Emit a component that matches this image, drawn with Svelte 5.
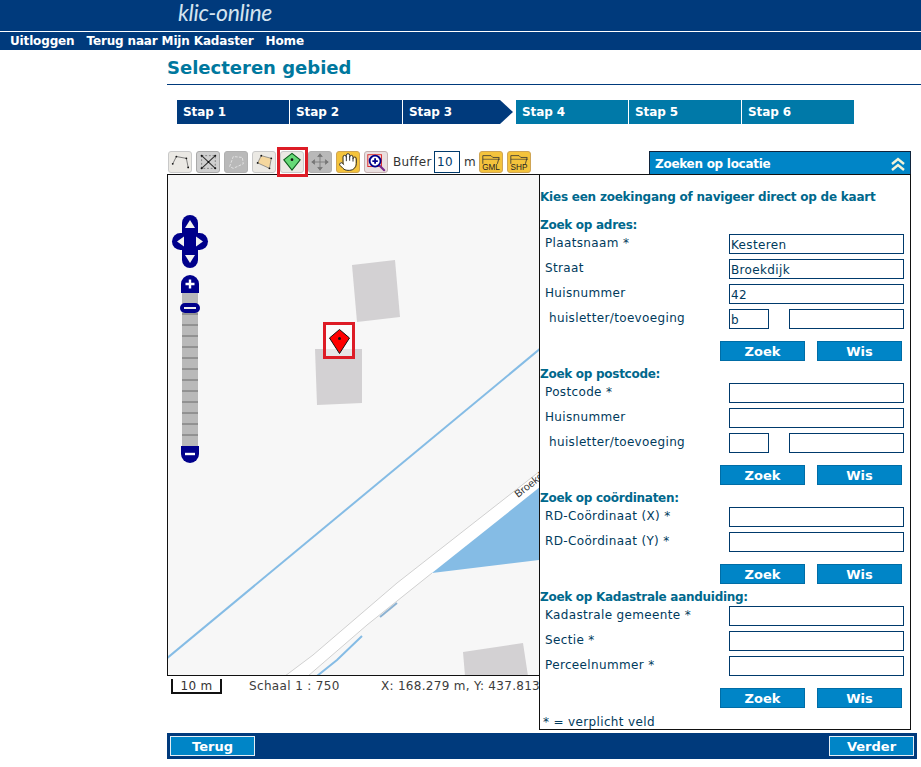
<script>
  const steps = ['Stap 1', 'Stap 2', 'Stap 3', 'Stap 4', 'Stap 5', 'Stap 6'];

  // row: label, value, split = huisletter + toevoeging pair
  const sections = [
    {
      title: 'Zoek op adres:',
      rows: [
        { label: 'Plaatsnaam *', value: 'Kesteren' },
        { label: 'Straat', value: 'Broekdijk' },
        { label: 'Huisnummer', value: '42' },
        { label: 'huisletter/toevoeging', value: 'b', split: true }
      ]
    },
    {
      title: 'Zoek op postcode:',
      rows: [
        { label: 'Postcode *', value: '' },
        { label: 'Huisnummer', value: '' },
        { label: 'huisletter/toevoeging', value: '', split: true }
      ]
    },
    {
      title: 'Zoek op coördinaten:',
      rows: [
        { label: 'RD-Coördinaat (X) *', value: '' },
        { label: 'RD-Coördinaat (Y) *', value: '' }
      ]
    },
    {
      title: 'Zoek op Kadastrale aanduiding:',
      rows: [
        { label: 'Kadastrale gemeente *', value: '' },
        { label: 'Sectie *', value: '' },
        { label: 'Perceelnummer *', value: '' }
      ]
    }
  ];

  // dark tick marks on the zoom rod
  const ticks = Array.from({ length: 12 }, (_, i) => 314 + i * 11);
</script>

<header class="top">
  <div class="logo">klic-online</div>
</header>
<nav class="menu">
  <span>Uitloggen</span>
  <span>Terug naar Mijn Kadaster</span>
  <span>Home</span>
</nav>

<main class="content">
  <h1>Selecteren gebied</h1>

  <div class="steps">
    {#each steps as step, i}
      <div class="step" class:done={i < 2} class:current={i === 2}>{step}</div>
    {/each}
  </div>

  <div class="workspace">
    <div class="toolbar">
      <button class="tool">
        <svg viewBox="0 0 24 22"><path d="M4 13 8 5 19 7 21 17" fill="none" stroke="#555" stroke-width=".8"/><g fill="#111"><circle cx="4" cy="13" r="1"/><circle cx="8" cy="5" r="1"/><circle cx="19" cy="7" r="1"/><circle cx="21" cy="17" r="1"/></g></svg>
      </button>
      <button class="tool grey">
        <svg viewBox="0 0 24 22"><path d="M5 4 20 18M20 4 5 18" stroke="#333" stroke-width="1.2"/><path d="M5 4 20 4 20 18 5 18Z" fill="none" stroke="#666" stroke-width=".8" stroke-dasharray="2 2"/><g fill="#111"><circle cx="5" cy="4" r="1.1"/><circle cx="20" cy="4" r="1.1"/><circle cx="20" cy="18" r="1.1"/><circle cx="5" cy="18" r="1.1"/><circle cx="12.5" cy="11" r="1.1"/></g></svg>
      </button>
      <button class="tool off">
        <svg viewBox="0 0 24 22"><path d="M5 16 9 5 19 6 20 13 9 18Z" fill="none" stroke="#e4e4e4" stroke-width="1" stroke-dasharray="3 1.500"/></svg>
      </button>
      <button class="tool">
        <svg viewBox="0 0 24 22"><path d="M5 12 9 4 20 7 18 18Z" fill="#f5d79e" stroke="#777" stroke-width=".8"/><g fill="#111"><circle cx="5" cy="12" r="1"/><circle cx="9" cy="4" r="1"/><circle cx="20" cy="7" r="1"/><circle cx="18" cy="18" r="1"/></g></svg>
      </button>
      <button class="tool marked">
        <svg viewBox="0 0 24 22"><path d="M12 1.5 21 8.5 12 20 3 8.5Z" fill="#66d977" stroke="#0b5a1c" stroke-width="1.2"/><circle cx="12" cy="8.5" r="1.5" fill="#111"/></svg>
      </button>
      <button class="tool off">
        <svg viewBox="0 0 24 22"><path d="M12 2V20M3 11H21M12 2 9.5 5H14.5ZM12 20 9.5 17H14.5ZM3 11 6 8.5V13.5ZM21 11 18 8.5V13.5Z" fill="#777" stroke="#777" stroke-width=".9"/></svg>
      </button>
      <button class="tool amber">
        <svg viewBox="0 0 24 24" class="hand"><path d="M7 15 6 6l2-2 2 1 1-3h2l1 2 2 0 2 2 2 1 1 2v7l-3 5-5 1-5-1-6-6 1-3Z" fill="#fff"/><g fill="none" stroke="#333" stroke-width="1.2" stroke-linecap="round" stroke-linejoin="round"><path d="M18 11V6a2 2 0 0 0-4 0"/><path d="M14 10V4a2 2 0 0 0-4 0v2"/><path d="M10 10.5V6a2 2 0 0 0-4 0v8"/><path d="M18 8a2 2 0 1 1 4 0v6a8 8 0 0 1-8 8h-2c-2.8 0-4.5-.86-6-2.3l-3.6-3.6a2 2 0 0 1 2.8-2.8L7 15"/></g></svg>
      </button>
      <button class="tool pale">
        <svg viewBox="0 0 24 22"><rect x="3" y="3" width="15" height="13" fill="none" stroke="#d22" stroke-width="1"/><path d="M15 14 21 20" stroke="#7a2a8a" stroke-width="2.4" stroke-linecap="round"/><circle cx="11" cy="10" r="6" fill="#fff" stroke="#00008b" stroke-width="2"/><path d="M11 7V13M8 10H14" stroke="#00008b" stroke-width="2"/></svg>
      </button>
      <span class="buffer">Buffer</span>
      <input class="buffer-input" value="10" />
      <span class="unit">m</span>
      <button class="tool amber">
        <svg viewBox="0 0 24 22" class="export"><path d="M3 13V4H12L14 6H21L19 13" fill="none" stroke="#333" stroke-width=".9"/><path d="M3 8H22" stroke="#333" stroke-width=".7"/><text x="12" y="20" text-anchor="middle">GML</text></svg>
      </button>
      <button class="tool amber">
        <svg viewBox="0 0 24 22" class="export"><path d="M3 13V4H12L14 6H21L19 13" fill="none" stroke="#333" stroke-width=".9"/><path d="M3 8H22" stroke="#333" stroke-width=".7"/><text x="12" y="20" text-anchor="middle">SHP</text></svg>
      </button>
    </div>

    <div class="panel-head">
      <span>Zoeken op locatie</span>
      <svg viewBox="0 0 16 14" width="16" height="14"><path d="M2 7 8 2 14 7M2 13 8 8 14 13" fill="none" stroke="#f4f4d8" stroke-width="2.4"/></svg>
    </div>

    <div class="left">
      <div class="map">
        <svg viewBox="168 175 372 500" width="372" height="500">
          <rect x="168" y="175" width="372" height="500" fill="#f7f7f7"/>
          <polygon points="352,265 395,260 400,317 357,322" fill="#d3d1d3"/>
          <polygon points="315,349 362,349 362,403 317,405" fill="#d3d1d3"/>
          <polygon points="463,652 523,643 528,676 465,676" fill="#d3d1d3"/>

          <line x1="166" y1="659" x2="541" y2="348" stroke="#85bce5" stroke-width="2"/>

          <polygon points="285,676 313,655 397,583 540,471 540,487 432,573 367,625 308,676" fill="#fff"/>
          <path d="M285 676 313 655 397 583 540 471" fill="none" stroke="#d0d0d0" stroke-width="1"/>
          <path d="M308 676 367 625 432 573" fill="none" stroke="#d0d0d0" stroke-width="1"/>
          <polygon points="432,573 540,487 540,560" fill="#85bce5"/>
          <path d="M380 617 397 603" stroke="#8cb2d2" stroke-width="2"/>
          <path d="M317 676 337 660 362 636" fill="none" stroke="#85bce5" stroke-width="2"/>
          <text class="road-name" transform="translate(518 498) rotate(-38)">Broekdijk</text>

          <!-- gemarkeerde locatie -->
          <rect x="324.500" y="323.500" width="29" height="34" fill="#fff" fill-opacity=".45" stroke="#dd1c26" stroke-width="3"/>
          <path d="M339.500 329.500 349.500 338 339.500 353.500 329.500 338Z" fill="#f00" stroke="#111" stroke-width="1"/>
          <circle cx="339.500" cy="338.500" r="1.500" fill="#111"/>

          <!-- pan control -->
          <rect x="182" y="215" width="16" height="53" rx="8" fill="#00008b"/>
          <rect x="172" y="233" width="36" height="17" rx="8.500" fill="#00008b"/>
          <path d="M190 220 195 228H185ZM190 263 195 255H185ZM177 241.500 184 236.500V246.500ZM203 241.500 196 236.500V246.500Z" fill="#f2f2f2"/>

          <!-- zoom rod -->
          <rect x="182" y="290" width="16" height="160" fill="#b9b9b9"/>
          {#each ticks as y}
            <line x1="182" x2="198" y1={y} y2={y} stroke="#6a6a6a" stroke-width="1"/>
          {/each}
          <path d="M181 293V284a9 9 0 0 1 18 0V293Z" fill="#00008b"/>
          <path d="M190 279.500V288.500M185.500 284H194.500" stroke="#fff" stroke-width="2.400"/>
          <rect x="180" y="303" width="20" height="10" rx="5" fill="#00008b"/>
          <line x1="184" x2="196" y1="308" y2="308" stroke="#eee" stroke-width="2"/>
          <path d="M181 446V454a9 9 0 0 0 18 0V446Z" fill="#00008b"/>
          <line x1="185" x2="195" y1="454" y2="454" stroke="#fff" stroke-width="2.400"/>
        </svg>
      </div>
      <div class="status">
        <span class="scalebar">10 m</span>
        <span class="scale">Schaal 1 : 750</span>
        <span class="coords">X: 168.279 m, Y: 437.813</span>
      </div>
    </div>

    <aside class="panel">
      <p class="intro">Kies een zoekingang of navigeer direct op de kaart</p>
      {#each sections as section}
        <section>
          <h2>{section.title}</h2>
          <div class="rows">
            {#each section.rows as row}
              <div class="row">
                <span class="label" class:indent={row.split}>{row.label}</span>
                {#if row.split}
                  <input class="small" value={row.value} />
                  <input class="rest" />
                {:else}
                  <input class="wide" value={row.value} />
                {/if}
              </div>
            {/each}
          </div>
          <div class="actions">
            <button class="btn">Zoek</button>
            <button class="btn">Wis</button>
          </div>
        </section>
      {/each}
      <p class="note">* = verplicht veld</p>
    </aside>
  </div>

  <footer class="bottom">
    <button class="btn nav">Terug</button>
    <button class="btn nav">Verder</button>
  </footer>
</main>

<style>
  :global(body) {
    margin: 0;
    background: #fff;
    font-family: "DejaVu Sans", Verdana, sans-serif;
    font-size: 12px;
    letter-spacing: 0.35px;
    color: #003a5c;
    overflow: hidden;
  }

  .top {
    height: 31px;
    background: #003a7c;
    border-bottom: 1px solid #fff;
    padding-left: 178px;
  }

  .logo {
    font-family: Lato, sans-serif;
    font-style: italic;
    font-weight: 400;
    font-size: 23px;
    line-height: 24px;
    letter-spacing: -0.3px;
    color: #d4e4f0;
  }

  .menu {
    height: 18px;
    background: #003a7c;
    display: flex;
    gap: 12px;
    padding-left: 10px;
    color: #fff;
    font-weight: bold;
    letter-spacing: -0.15px;
    line-height: 19px;
  }

  .content {
    margin-left: 167px;
  }

  h1 {
    margin: 0;
    height: 34px;
    line-height: 35px;
    font-size: 18px;
    font-weight: bold;
    letter-spacing: 0;
    color: #00789e;
    border-bottom: 1px solid #003a7c;
  }

  .steps {
    display: flex;
    gap: 1px;
    margin: 15px 0 0 10px;
  }

  .step {
    width: 112px;
    height: 24px;
    box-sizing: border-box;
    padding-left: 6px;
    line-height: 25px;
    font-weight: bold;
    letter-spacing: -0.1px;
    color: #fff;
    background: #0079a8;
  }

  .step.done {
    background: #003a7c;
  }

  .step.current {
    background: #003a7c;
    clip-path: polygon(0 0, 97px 0, 110px 50%, 97px 100%, 0 100%);
  }

  .workspace {
    display: grid;
    grid-template-columns: 372px 372px;
    grid-template-rows: 23px auto;
    margin-top: 27px;
  }

  .toolbar {
    display: flex;
    align-items: flex-start;
    gap: 4px;
    padding-left: 1px;
    position: relative;
    z-index: 2;
    white-space: nowrap;
  }

  .tool {
    position: relative;
    width: 24px;
    height: 22px;
    padding: 0;
    flex: none;
    background: #ebe9e4;
    border: 1px solid #c9c9c9;
    border-radius: 3px;
    box-sizing: border-box;
    display: block;
  }

  .tool svg {
    display: block;
    width: 22px;
    height: 20px;
  }

  .tool.grey {
    background: #cfcfcf;
    border-color: #aaa;
  }

  .tool.off {
    background: #b9b9b9;
    border-color: #b0b0b0;
  }

  .tool.amber {
    background: #f4c33c;
    border-color: #cfa555;
  }

  .tool.pale {
    background: #eadfdf;
    border-color: #c4b0b0;
  }

  .tool.marked::after {
    content: "";
    position: absolute;
    left: -4px;
    top: -5px;
    width: 31px;
    height: 30px;
    box-sizing: border-box;
    border: 3px solid #dd1c26;
  }

  .tool .hand {
    width: 20px;
    height: 20px;
    margin-left: 1px;
  }

  .export text {
    font-size: 9px;
    font-family: "Liberation Sans", sans-serif;
    letter-spacing: 0;
    fill: #222;
  }

  .buffer {
    width: 37px;
    margin-left: 1px;
    line-height: 22px;
    color: #333;
  }

  .unit {
    width: 11px;
    line-height: 22px;
    color: #333;
  }

  .buffer-input {
    width: 26px;
    height: 22px;
    box-sizing: border-box;
    border: 1px solid #003a6c;
    padding: 0 2px;
    font: 12px "DejaVu Sans", sans-serif;
    letter-spacing: 0.35px;
    color: #003a6c;
  }

  .panel-head {
    justify-self: end;
    width: 262px;
    height: 23px;
    box-sizing: border-box;
    padding: 1px 4px 0 5px;
    display: flex;
    align-items: center;
    justify-content: space-between;
    background: #0085c7;
    border: 1px solid #10243c;
    border-bottom: 0;
    color: #fff;
    font-weight: bold;
    letter-spacing: -0.28px;
  }

  .left {
    min-width: 0;
  }

  .map {
    height: 500px;
    border: 1px solid #111;
    border-right: 0;
    overflow: hidden;
  }

  .map svg {
    display: block;
  }

  .road-name {
    font-family: "Liberation Sans", sans-serif;
    font-size: 10.5px;
    letter-spacing: 0;
    fill: #333;
  }

  .status {
    display: flex;
    height: 19px;
    overflow: hidden;
    white-space: nowrap;
    color: #3c3c3c;
    padding-top: 3px;
  }

  .scalebar {
    flex: none;
    width: 51px;
    height: 15px;
    margin-left: 4px;
    box-sizing: border-box;
    border: 2px solid #111;
    border-top: 0;
    text-align: center;
    line-height: 14px;
    color: #333;
  }

  .scale {
    flex: none;
    margin-left: 27px;
    width: 132px;
    line-height: 15px;
  }

  .coords {
    flex: none;
    line-height: 15px;
    letter-spacing: 0.29px;
  }

  .panel {
    height: 556px;
    box-sizing: border-box;
    border: 1px solid #111;
    background: #fff;
    overflow: hidden;
  }

  .intro {
    margin: 15px 0 0;
    height: 26px;
    line-height: 14px;
    font-weight: bold;
    letter-spacing: -0.22px;
    color: #00688c;
  }

  section {
    margin-bottom: 4px;
  }

  h2 {
    margin: 0 0 2px;
    height: 16px;
    line-height: 18px;
    font-size: 12px;
    font-weight: bold;
    letter-spacing: -0.28px;
    color: #00688c;
  }

  .rows {
    display: flex;
    flex-direction: column;
    gap: 5px;
  }

  .row {
    display: flex;
    height: 20px;
  }

  .label {
    width: 184px;
    padding-left: 5px;
    line-height: 18px;
    white-space: nowrap;
  }

  .label.indent {
    width: 180px;
    padding-left: 9px;
  }

  .row input {
    height: 20px;
    box-sizing: border-box;
    border: 1px solid #003a6c;
    padding: 2px 1px 0;
    font: 12px "DejaVu Sans", sans-serif;
    letter-spacing: 0.35px;
    color: #003a5c;
    background: #fff;
  }

  .wide {
    width: 175px;
  }

  .small {
    width: 40px;
    margin-right: 20px;
  }

  .rest {
    width: 115px;
  }

  .actions {
    display: flex;
    gap: 12px;
    margin: 12px 0 0 180px;
  }

  .btn {
    width: 85px;
    height: 20px;
    padding: 0;
    border: 1px solid #006da6;
    background: #0085c7;
    color: #fff;
    font: bold 13px "DejaVu Sans", sans-serif;
  }

  .note {
    margin: 7px 0 0 3px;
    line-height: 14px;
  }

  .bottom {
    width: 750px;
    height: 26px;
    margin-top: 3px;
    box-sizing: border-box;
    padding: 3px;
    display: flex;
    justify-content: space-between;
    background: #003a7c;
  }

  .nav {
    border-color: #e4eef4;
  }
</style>
